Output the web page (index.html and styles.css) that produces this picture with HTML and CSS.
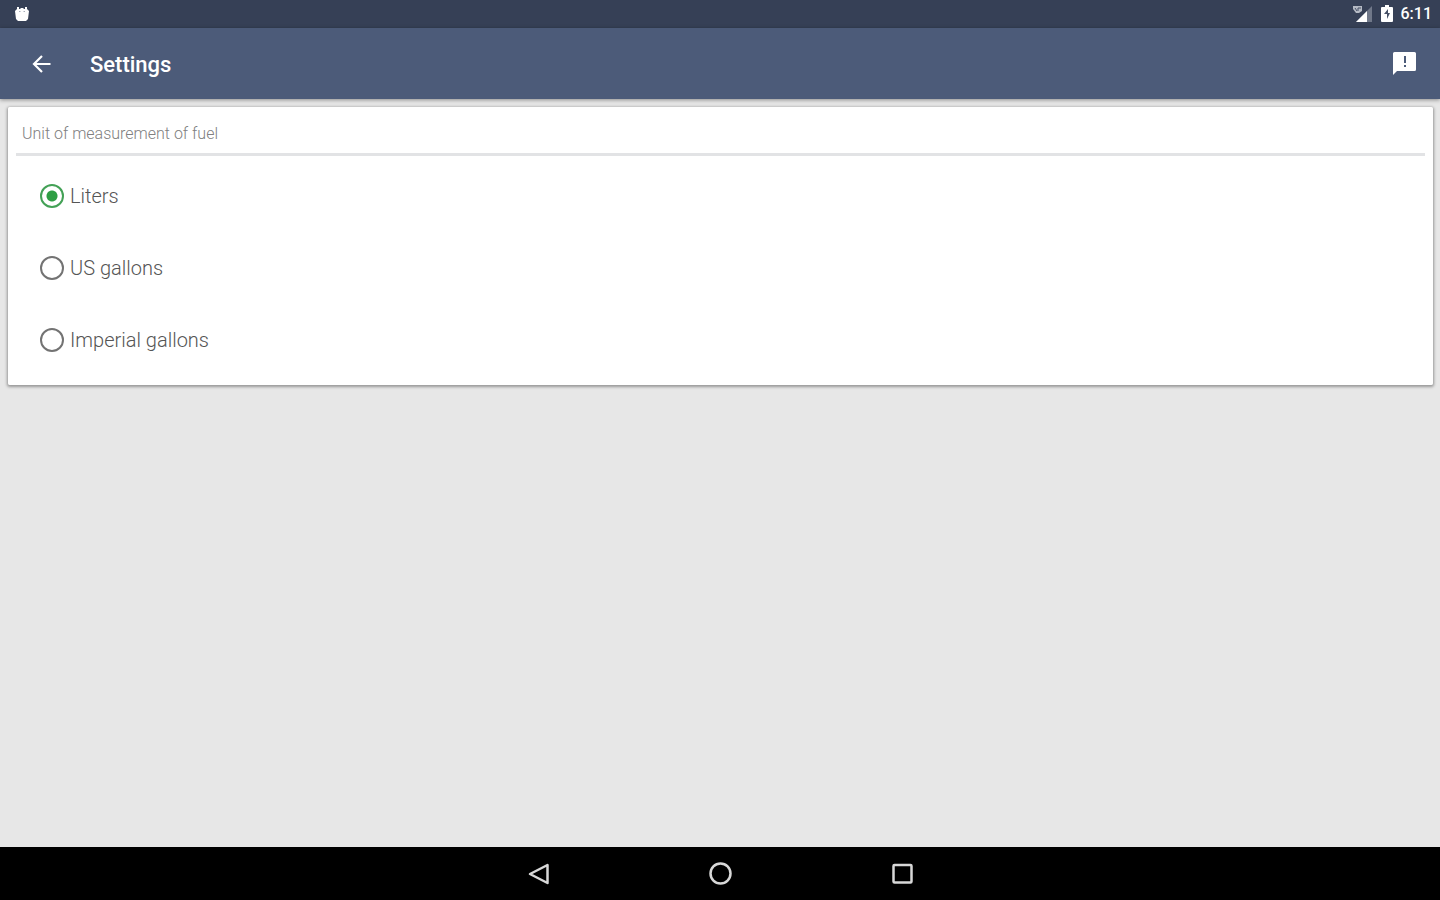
FILE: index.html
```html
<!DOCTYPE html>
<html lang="en">
<head>
<meta charset="utf-8">
<meta name="viewport" content="width=device-width, initial-scale=1">
<title>Settings</title>
<link rel="stylesheet" href="styles.css">
</head>
<body>
<div class="status-bar">
  <svg class="notice-icon" width="16" height="16" viewBox="0 0 16 16" aria-hidden="true">
    <path d="M3 1h2v2h1.500V2h3v1H11V1h2v2l2 2-1 8-2 2H4l-2-2-1-8 2-2z" fill="#fff"/>
    <path d="M5 5.500h1.500M9.500 5.500H11" stroke="#a9afba"/>
  </svg>
  <div class="status-info">
    <svg width="20" height="18" viewBox="0 0 20 18" aria-hidden="true">
      <path d="M19 1v16H3z" fill="#707889"/>
      <path d="M14 6v11H3z" fill="#fff"/>
      <path d="M0 1h9v5l-3 2H3L0 4z" fill="#b5bac4"/>
      <path d="M2 3l2 3M5 3v3M5 3h3" stroke="#454f65" fill="none"/>
    </svg>
    <svg width="12" height="18" viewBox="0 0 12 18" aria-hidden="true">
      <path d="M4 0h4v2h3q1 0 1 1v13q0 1-1 1H1q-1 0-1-1V3q0-1 1-1h3z" fill="#fff"/>
      <path d="M7 4L3 9h3v5l3-6H7z" fill="#465066"/>
    </svg>
    <time class="clock">6:11</time>
  </div>
</div>
<header class="app-bar">
  <button class="icon-button" type="button" aria-label="Back">
    <svg width="20" height="20" viewBox="0 0 20 20" aria-hidden="true"><path d="M19.500 10H3M11 2l-8 8 8 8" fill="none" stroke="#fff" stroke-width="2.200"/></svg>
  </button>
  <h1 class="title">Settings</h1>
  <button class="icon-button" type="button" aria-label="Send feedback">
    <svg width="24" height="24" viewBox="0 0 24 24" aria-hidden="true">
      <path d="M2.500 0h20q1.500 0 1.500 1.500v16q0 1.500-1.500 1.500H5l-4 4V1.500Q1 0 2.500 0z" fill="#fff"/>
      <path d="M12 4h2v7h-2zM12 13h2v2h-2z" fill="#4c5b79"/>
    </svg>
  </button>
</header>
<main class="content">
  <fieldset class="card">
    <legend class="card-title">Unit of measurement of fuel</legend>
    <label class="option"><input class="radio" type="radio" name="fuel" checked>Liters</label>
    <label class="option"><input class="radio" type="radio" name="fuel">US gallons</label>
    <label class="option"><input class="radio" type="radio" name="fuel">Imperial gallons</label>
  </fieldset>
</main>
<nav class="nav-bar" aria-label="System">
  <button class="icon-button" type="button" aria-label="Back">
    <svg width="24" height="24" viewBox="0 0 24 24" aria-hidden="true"><path d="M21.500 3v18L4 12z" fill="none" stroke="#d8d8d8" stroke-width="2.500" stroke-linejoin="round"/></svg>
  </button>
  <button class="icon-button" type="button" aria-label="Home">
    <svg width="24" height="24" viewBox="0 0 24 24" aria-hidden="true"><circle cx="12.500" cy="11.500" r="10" fill="none" stroke="#d8d8d8" stroke-width="2.500"/></svg>
  </button>
  <button class="icon-button" type="button" aria-label="Recent apps">
    <svg width="24" height="24" viewBox="0 0 24 24" aria-hidden="true"><rect x="3.500" y="3" width="18" height="17.500" rx="1" fill="none" stroke="#d8d8d8" stroke-width="2.500"/></svg>
  </button>
</nav>
</body>
</html>
```

FILE: styles.css
```css
* { box-sizing: border-box; }
body {
  display: flex;
  flex-direction: column;
  min-height: 100vh;
  margin: 0;
  background: #e7e7e7;
  font-family: Roboto, "Liberation Sans", sans-serif;
}
.status-bar {
  display: flex;
  align-items: center;
  justify-content: space-between;
  height: 28px;
  padding: 0 8px 0 14px;
  background: #364056;
  color: #fff;
}
.status-info { display: flex; align-items: center; gap: 8px; }
.clock { font-size: 16px; font-weight: 500; line-height: 28px; }
.app-bar {
  display: flex;
  align-items: center;
  height: 71px;
  padding: 0 24px 0 29px;
  background: #4c5b79;
  box-shadow: 0 1px 4px rgba(0, 0, 0, 0.4);
}
.icon-button {
  display: flex;
  align-items: center;
  justify-content: center;
  padding: 0;
  border: 0;
  background: none;
  cursor: pointer;
}
.app-bar .icon-button { width: 24px; height: 48px; }
.title {
  flex: 1;
  margin: 0 0 0 37px;
  padding-top: 3px;
  color: #fff;
  font-size: 22px;
  font-weight: 500;
  line-height: 32px;
}
.content { flex: 1; padding: 8px 7px 8px 8px; }
.card {
  min-width: 0;
  margin: 0;
  padding: 0 8px 9px;
  border: 0;
  border-radius: 2px;
  background: #fff;
  box-shadow: 0 1px 3px 1px rgba(0, 0, 0, 0.35);
}
.card-title {
  float: left;
  width: 100%;
  margin-bottom: 4px;
  padding: 15px 6px 7px;
  border-bottom: 3px solid #e2e3e5;
  color: #808080;
  font-size: 16px;
  font-weight: 300;
  line-height: 24px;
}
.option {
  display: flex;
  clear: both;
  align-items: center;
  gap: 6px;
  height: 72px;
  padding-left: 24px;
  color: #555;
  font-size: 20px;
  font-weight: 300;
}
.radio {
  appearance: none;
  width: 24px;
  height: 24px;
  margin: 0;
  border: 2px solid #737373;
  border-radius: 50%;
}
.radio:checked {
  border-color: #43a156;
  background: radial-gradient(circle, #2f9e44 5px, transparent 6px);
}
.nav-bar {
  display: flex;
  justify-content: center;
  gap: 158px;
  height: 53px;
  background: #000;
}
.nav-bar .icon-button { width: 24px; }
```
